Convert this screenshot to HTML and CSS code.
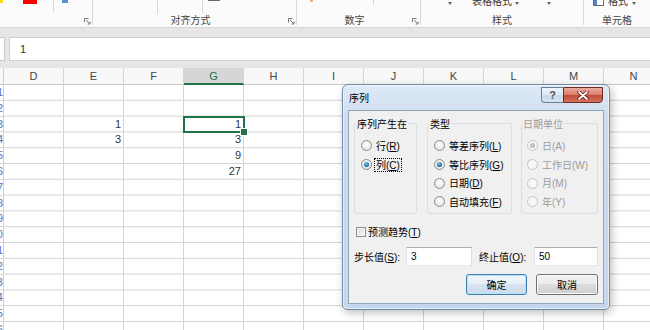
FILE: index.html
```html
<!DOCTYPE html>
<html lang="zh-CN">

<head>

  <meta charset="UTF-8">
  <meta name="viewport" content="width=device-width, initial-scale=1.0">

  <title>序列</title>

  <link rel="stylesheet" href="styles.css">

</head>

<body>

  <header class="ribbon">
    <div class="grp grp-font">
      <div class="grp-top">
        <i class="chip chip-yellow"></i>
        <i class="chip chip-red"></i>
        <i class="tick tick-font"></i>
        <i class="chip chip-blue"></i>
      </div>
      <div class="grp-label">
        <span></span>
        <svg class="launcher" width="7" height="7" viewBox="0 0 7 7"><path d="M0.5 4.5V0.5H4.5M2 2L6 6M6 3.5V6H3.5" stroke="#7a7a7a" fill="none"/></svg>
      </div>
    </div>
    <div class="grp grp-align">
      <div class="grp-top">
        <i class="tick tick-a1"></i>
        <i class="tick tick-a2"></i>
        <i class="dash"></i>
      </div>
      <div class="grp-label">
        <span>对齐方式</span>
        <svg class="launcher" width="7" height="7" viewBox="0 0 7 7"><path d="M0.5 4.5V0.5H4.5M2 2L6 6M6 3.5V6H3.5" stroke="#7a7a7a" fill="none"/></svg>
      </div>
    </div>
    <div class="grp grp-number">
      <div class="grp-top">
        <i class="dot-orange"></i>
        <i class="tick tick-n1"></i>
      </div>
      <div class="grp-label">
        <span>数字</span>
        <svg class="launcher" width="7" height="7" viewBox="0 0 7 7"><path d="M0.5 4.5V0.5H4.5M2 2L6 6M6 3.5V6H3.5" stroke="#7a7a7a" fill="none"/></svg>
      </div>
    </div>
    <div class="grp grp-style">
      <div class="grp-top">
        <i class="caret caret-s1"></i>
        <span class="cut-text cut-s">表格格式</span>
        <i class="caret caret-s2"></i>
        <i class="caret caret-s3"></i>
      </div>
      <div class="grp-label"><span>样式</span></div>
    </div>
    <div class="grp grp-cells">
      <div class="grp-top">
        <svg class="cell-icon" width="11" height="6" viewBox="0 0 11 6"><rect x="0.5" y="-1" width="10" height="6.5" fill="#fff" stroke="#6a6a6a"/><rect x="1" y="0" width="3" height="5" fill="#4f86c6"/></svg>
        <span class="cut-text cut-c">格式</span>
        <i class="caret caret-c1"></i>
      </div>
      <div class="grp-label"><span>单元格</span></div>
    </div>
  </header>

  <div class="fbar">
    <div class="namebox"></div>
    <div class="formula">1</div>
  </div>

  <section class="sheet">
    <div class="col-heads">
      <div class="corner"></div>
      <div class="col-head">D</div>
      <div class="col-head">E</div>
      <div class="col-head">F</div>
      <div class="col-head is-active">G</div>
      <div class="col-head">H</div>
      <div class="col-head">I</div>
      <div class="col-head">J</div>
      <div class="col-head">K</div>
      <div class="col-head">L</div>
      <div class="col-head">M</div>
      <div class="col-head">N</div>
    </div>
    <div class="grid-body">
      <div class="row-heads">
        <span>1</span><span>2</span><span>3</span><span>4</span><span>5</span>
        <span>6</span><span>7</span><span>8</span><span>9</span><span>10</span>
        <span>11</span><span>12</span><span>13</span><span>14</span><span>15</span><span>16</span>
      </div>
      <div class="cells">
        <div class="val c-e r-3">1</div>
        <div class="val c-e r-4">3</div>
        <div class="val c-g r-3 is-sel">1</div>
        <div class="val c-g r-4">3</div>
        <div class="val c-g r-5">9</div>
        <div class="val c-g r-6">27</div>
      </div>
    </div>
  </section>

  <div class="dialog" role="dialog">
    <div class="dlg-title">
      <h1>序列</h1>
      <button class="cap-btn cap-help">?</button>
      <button class="cap-btn cap-close">
        <svg width="12" height="9" viewBox="0 0 12 9"><path d="M2 1L10 8M10 1L2 8" stroke="#5a1f18" stroke-width="3.4" stroke-linecap="round"/><path d="M2 1L10 8M10 1L2 8" stroke="#fff" stroke-width="1.8" stroke-linecap="round"/></svg>
      </button>
    </div>
    <div class="dlg-body">
      <div class="groups">
        <fieldset class="box box-series">
          <legend>序列产生在</legend>
          <label class="opt"><i class="radio"></i><span>行<span class="key">(<u>R</u>)</span></span></label>
          <label class="opt"><i class="radio is-on"></i><span class="focus">列<span class="key">(<u>C</u>)</span></span></label>
        </fieldset>
        <fieldset class="box box-type">
          <legend>类型</legend>
          <label class="opt"><i class="radio"></i><span>等差序列<span class="key">(<u>L</u>)</span></span></label>
          <label class="opt"><i class="radio is-on"></i><span>等比序列<span class="key">(<u>G</u>)</span></span></label>
          <label class="opt"><i class="radio"></i><span>日期<span class="key">(<u>D</u>)</span></span></label>
          <label class="opt"><i class="radio"></i><span>自动填充<span class="key">(<u>F</u>)</span></span></label>
        </fieldset>
        <fieldset class="box box-unit is-off">
          <legend>日期单位</legend>
          <label class="opt"><i class="radio is-on"></i><span>日<span class="key">(A)</span></span></label>
          <label class="opt"><i class="radio"></i><span>工作日<span class="key">(W)</span></span></label>
          <label class="opt"><i class="radio"></i><span>月<span class="key">(M)</span></span></label>
          <label class="opt"><i class="radio"></i><span>年<span class="key">(Y)</span></span></label>
        </fieldset>
      </div>
      <label class="check"><i class="checkbox"></i><span>预测趋势<span class="key">(<u>T</u>)</span></span></label>
      <div class="fields">
        <span class="f-label">步长值<span class="key">(<u>S</u>):</span></span>
        <div class="field field-step">3</div>
        <span class="f-label f-label-end">终止值<span class="key">(<u>O</u>):</span></span>
        <div class="field field-end">50</div>
      </div>
      <div class="actions">
        <button class="btn btn-default">确定</button>
        <button class="btn btn-cancel">取消</button>
      </div>
    </div>
  </div>

</body>

</html>
```

FILE: styles.css
```css
* {
  box-sizing: border-box;
}
body {
  margin: 0;
  width: 650px;
  height: 330px;
  overflow: hidden;
  position: relative;
  background-color: #fff;
  font-family: "Liberation Sans", "Noto Sans CJK SC", sans-serif;
}

/* ribbon */
.ribbon {
  display: flex;
  align-items: flex-start;
  height: 28px;
  background-color: #fbfbfb;
  border-bottom: 1px solid #d5d5d5;
  overflow: hidden;
}
.grp {
  display: flex;
  flex-direction: column;
  flex: none;
  height: 25px;
  border-right: 1px solid #dadada;
}
.grp-font { width: 93px; }
.grp-align { width: 204px; }
.grp-number { width: 124px; }
.grp-style { width: 163px; }
.grp-cells { flex: 1; border-right: 0; }
.grp-top {
  display: flex;
  align-items: flex-start;
  height: 14px;
}
.grp-top i {
  display: block;
  flex: none;
}
.grp-label {
  display: flex;
  align-items: center;
  height: 11px;
  font: 10px/11px "Noto Sans CJK SC", sans-serif;
  color: #444;
}
.grp-label span {
  flex: 1;
  text-align: center;
}
.launcher {
  flex: none;
  margin: 3px 1px 0 0;
}
.chip-yellow { width: 3px; height: 3px; background-color: #ffe100; }
.chip-red { width: 14px; height: 4px; margin-left: 20px; background-color: #ff0000; }
.chip-blue { width: 6px; height: 3px; margin-left: 8px; background-color: #5b8fd0; }
.tick { width: 1px; height: 12px; background-color: #d6d6d6; }
.tick-font { margin-left: 16px; }
.tick-a1 { margin-left: 64px; height: 14px; }
.tick-a2 { margin-left: 44px; height: 14px; }
.dash { width: 12px; height: 1px; margin-left: 5px; background-color: #6a6a6a; }
.dot-orange { width: 3px; height: 2px; margin-left: 13px; background-color: #f0b060; border-radius: 0 0 2px 2px; }
.tick-n1 { margin-left: 60px; height: 5px; }
.caret {
  width: 0;
  height: 0;
  margin-top: 2px;
  border-left: 2.5px solid transparent;
  border-right: 2.5px solid transparent;
  border-top: 3px solid #666;
}
.caret-s1 { margin-left: 27px; }
.caret-s2 { margin-left: 3px; }
.caret-s3 { margin-left: 28px; }
.caret-c1 { margin-left: 4px; }
.cut-text {
  margin-top: -5px;
  font: 10px/11px "Noto Sans CJK SC", sans-serif;
  color: #333;
}
.cut-s { margin-left: 20px; }
.cut-c { margin-left: 4px; }
.cell-icon { flex: none; margin-left: 9px; }

/* formula bar */
.fbar {
  display: flex;
  height: 40px;
  padding: 9px 0 7px;
  background-color: #e6e6e6;
}
.namebox {
  width: 5px;
  background-color: #fff;
  border: 1px solid #c8c8c8;
  border-left: 0;
}
.formula {
  flex: 1;
  margin-left: 4px;
  padding-left: 10px;
  background-color: #fff;
  border: 1px solid #d0d0d0;
  border-right: 0;
  font-size: 11px;
  line-height: 22px;
  color: #333;
}

/* sheet */
.col-heads {
  display: flex;
  height: 17px;
  background-color: #f8f8f8;
}
.corner {
  width: 4px;
  flex: none;
  border-right: 1px solid #d0d0d0;
  border-bottom: 1px solid #c8c8c8;
}
.col-head {
  width: 60px;
  flex: none;
  border-right: 1px solid #d6d6d6;
  border-bottom: 1px solid #c8c8c8;
  text-align: center;
  font-size: 11px;
  line-height: 17px;
  color: #444;
}
.col-head.is-active {
  background-color: #d6d6d6;
  border-bottom: 2px solid #217346;
  color: #217346;
}
.grid-body {
  display: flex;
}
.row-heads {
  width: 4px;
  flex: none;
  overflow: hidden;
  direction: rtl;
  border-right: 1px solid #d0d0d0;
}
.row-heads span {
  display: block;
  height: 15.8px;
  padding-left: 1px;
  line-height: 15px;
  font-size: 11px;
  color: #5a70bb;
  white-space: nowrap;
  border-bottom: 1px solid #d8d8d8;
}
.cells {
  width: 660px;
  height: 245px;
  flex: none;
  display: grid;
  grid-template-columns: repeat(11, 60px);
  grid-auto-rows: 15.8px;
  background-image:
    linear-gradient(to right, transparent 59px, #d4d4d4 59px),
    linear-gradient(to bottom, transparent 14.8px, #d4d4d4 14.8px);
  background-size: 60px 100%, 100% 15.8px;
}
.val {
  padding-right: 3px;
  text-align: right;
  font-size: 11px;
  line-height: 15px;
  color: #333;
}
.c-e { grid-column: 2; }
.c-g { grid-column: 4; }
.r-3 { grid-row: 3; }
.r-4 { grid-row: 4; }
.r-5 { grid-row: 5; }
.r-6 { grid-row: 6; }
.val.is-sel {
  position: relative;
  outline: 2px solid #217346;
  outline-offset: -1px;
}
.val.is-sel::after {
  content: "";
  position: absolute;
  right: -4px;
  bottom: -4px;
  width: 6px;
  height: 6px;
  background-color: #217346;
  border: 1px solid #fff;
}

/* dialog */
.dialog {
  position: absolute;
  left: 342px;
  top: 84px;
  width: 268px;
  height: 226px;
  display: flex;
  flex-direction: column;
  border: 1px solid #7189a6;
  border-radius: 6px 6px 5px 5px;
  background: linear-gradient(#dde9f6, #cbdcef 40px, #c4d7ec);
  box-shadow: inset 0 0 0 1px rgba(255, 255, 255, .55), 2px 3px 8px rgba(0, 0, 0, .25);
  font: 10px/13px "Noto Sans CJK SC", sans-serif;
  color: #000;
}
.key {
  font-family: "Liberation Sans", sans-serif;
}
.dlg-title {
  display: flex;
  align-items: flex-start;
  height: 25px;
}
.dlg-title h1 {
  flex: 1;
  margin: 6px 0 0 6px;
  font-size: 10px;
  font-weight: normal;
  line-height: 13px;
}
.cap-btn {
  height: 16px;
  margin-top: 2px;
  padding: 0;
  border: 1px solid #6c7f98;
  font: bold 11px/14px "Liberation Sans", sans-serif;
}
.cap-help {
  width: 22px;
  border-right: 0;
  border-radius: 0 0 0 4px;
  background: linear-gradient(#eef3fa, #dbe6f3 50%, #c8d8eb 50%, #d6e3f2);
  color: #4d4d4d;
  text-shadow: 0 0 2px #fff;
}
.cap-close {
  width: 40px;
  margin-right: 6px;
  display: flex;
  align-items: center;
  justify-content: center;
  border-color: #6b2a22;
  border-radius: 0 0 4px 0;
  background: linear-gradient(#eaaa9c, #d97c6b 50%, #c24736 50%, #d4735f);
}
.dlg-body {
  flex: 1;
  display: flex;
  flex-direction: column;
  margin: 0 5px 5px;
  padding: 6px 5px 0;
  background-color: #f0f0f0;
  border: 1px solid #93a4bb;
}
.groups {
  display: flex;
}
.box {
  min-width: 0;
  height: 97px;
  margin: 0;
  padding: 0 0 0 6px;
  border: 1px solid #d5dfe5;
  border-radius: 3px;
}
.box legend {
  margin-left: -5px;
  padding: 0 1px;
  line-height: 13px;
}
.box-series { width: 63px; }
.box-type { width: 85px; margin-left: 10px; }
.box-unit { width: 77px; margin-left: 9px; padding-left: 5px; }
.opt {
  display: flex;
  align-items: center;
  gap: 4px;
  height: 18.7px;
  white-space: nowrap;
}
.opt:first-of-type {
  margin-top: 6.5px;
}
.radio {
  position: relative;
  width: 11px;
  height: 11px;
  flex: none;
  border: 1px solid #8c8c8c;
  border-radius: 50%;
  background: radial-gradient(circle at 50% 40%, #fff, #e6e6e6 70%, #d2d2d2);
}
.radio.is-on::after {
  content: "";
  position: absolute;
  inset: 2px;
  border-radius: 50%;
  background: radial-gradient(circle at 45% 35%, #8fd0f5, #2072b0 55%, #0f4a7e);
}
.focus {
  margin-left: -2px;
  padding: 0 1px;
  border: 1px dotted #000;
  line-height: 11px;
}
.is-off {
  color: #9c9c9c;
}
.is-off .radio {
  border-color: #c4c4c4;
  background: #f6f6f6;
}
.is-off .radio.is-on::after {
  background: radial-gradient(#d0d0d0, #a9a9a9);
}
.check {
  display: flex;
  align-items: center;
  gap: 2px;
  height: 13px;
  margin: 11.5px 0 0 2px;
}
.checkbox {
  width: 10px;
  height: 10px;
  border: 1px solid #8e8f8f;
  background: linear-gradient(135deg, #d8d8d8, #fbfbfb);
  box-shadow: inset 0 0 0 1px #f4f4f4;
}
.fields {
  display: flex;
  align-items: center;
  height: 19px;
  margin-top: 8.5px;
}
.f-label {
  width: 52px;
  flex: none;
}
.f-label-end {
  width: 55px;
  margin-left: 7px;
}
.field {
  height: 19px;
  padding: 0 4px;
  background-color: #fff;
  border: 1px solid;
  border-color: #abadb3 #dbdfe6 #e3e9ef #e2e3ea;
  font-family: "Liberation Sans", sans-serif;
  line-height: 17px;
}
.field-step { width: 66px; }
.field-end { width: 64px; }
.actions {
  display: flex;
  justify-content: flex-end;
  gap: 9px;
  margin-top: 8px;
}
.btn {
  height: 21px;
  padding: 0;
  border: 1px solid #707070;
  border-radius: 3px;
  background: linear-gradient(#f2f2f2, #ebebeb 50%, #dddddd 50%, #cfcfcf);
  box-shadow: inset 0 0 0 1px #fbfbfb;
  font: 10px/19px "Noto Sans CJK SC", sans-serif;
  color: #000;
}
.btn-default {
  width: 61px;
  border-color: #3c7fb1;
  background: linear-gradient(#f0f6fb, #e6eff7 50%, #d8e5f0 50%, #cddceb);
  box-shadow: inset 0 0 0 1px #b8e0f8;
}
.btn-cancel {
  width: 62px;
}
```
